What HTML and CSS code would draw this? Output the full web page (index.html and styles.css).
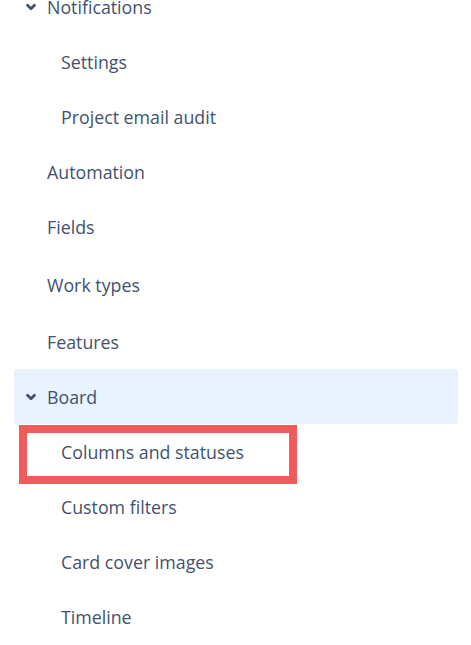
FILE: index.html
```html
<!DOCTYPE html>
<html>
<head>
<meta charset="utf-8">
<link rel="stylesheet" href="styles.css">
</head>
<body>
<nav class="nav">
  <div class="row group">
    <svg class="chev" viewBox="0 0 12 12" width="12" height="12"><path d="M2.5 4.3 L6 7.8 L9.5 4.3" fill="none" stroke="#42526e" stroke-width="2.8" stroke-linecap="round" stroke-linejoin="round"/></svg>
    <span>Notifications</span>
  </div>
  <div class="row sub"><span>Settings</span></div>
  <div class="row sub"><span>Project email audit</span></div>
  <div class="row top"><span>Automation</span></div>
  <div class="row top"><span>Fields</span></div>
  <div class="row top gap3"><span>Work types</span></div>
  <div class="row top gap2"><span>Features</span></div>
  <div class="row group active">
    <svg class="chev" viewBox="0 0 12 12" width="12" height="12"><path d="M2.5 4.3 L6 7.8 L9.5 4.3" fill="none" stroke="#42526e" stroke-width="2.8" stroke-linecap="round" stroke-linejoin="round"/></svg>
    <span>Board</span>
  </div>
  <div class="row sub highlighted"><span>Columns and statuses</span><div class="mark"></div></div>
  <div class="row sub"><span>Custom filters</span></div>
  <div class="row sub"><span>Card cover images</span></div>
  <div class="row sub"><span>Timeline</span></div>
</nav>
</body>
</html>
```
FILE: styles.css
```css
html, body {
  margin: 0;
  padding: 0;
  background: #ffffff;
}
body {
  font-family: "Open Sans", "Noto Sans", sans-serif;
  font-size: 17.8px;
  color: #42526e;
  overflow: hidden;
}
.nav {
  display: flex;
  flex-direction: column;
  margin: -21px 0 0 14px;
  width: 444px;
}
.row {
  position: relative;
  height: 55px;
  display: flex;
  align-items: center;
  border-radius: 3px;
}
.group {
  padding-left: 11px;
  gap: 10px;
}
.top {
  padding-left: 33px;
}
.sub {
  padding-left: 47px;
}
.gap3 { margin-top: 3px; }
.gap2 { margin-top: 2px; }
.active {
  background: #e9f2ff;
}
.chev {
  flex: none;
}
.mark {
  position: absolute;
  left: 5px;
  top: 1px;
  width: 262px;
  height: 43px;
  border: 8px solid #ef5b5b;
}
```
